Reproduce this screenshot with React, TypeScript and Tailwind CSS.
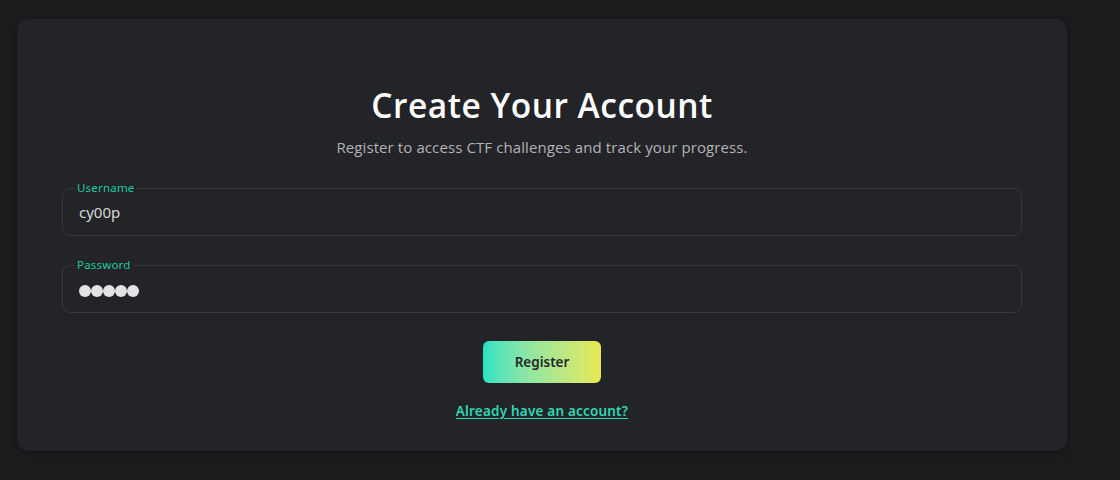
import React from "react";

export default function App() {
  return (
    <div className="min-h-[480px] w-full bg-[#1b1c1e] pt-[19px] pl-[17px] font-['Open_Sans',sans-serif]">
      <div className="w-[1050px] h-[432px] rounded-[12px] bg-[#232428] shadow-[0_2px_8px_rgba(0,0,0,0.35)] px-[45px] pt-[66px] flex flex-col items-center">
        <h1 className="text-[33.5px] leading-[40px] font-semibold text-white tracking-[0.5px]">
          Create Your Account
        </h1>
        <p className="mt-[12px] text-[15px] leading-[20px] text-[#b3b3b6] tracking-[0.1px]">
          Register to access CTF challenges and track your progress.
        </p>

        <fieldset className="mt-[25px] w-full h-[54px] border border-[#37383d] rounded-[8px] px-[15px] pb-0 font-['Noto_Sans',sans-serif]">
          <legend className="-ml-[3px] px-[2px] text-[11.5px] leading-[12px] text-[#1fc9a0] tracking-[0.2px]">
            Username
          </legend>
          <div className="text-[15px] leading-[20px] text-[#d6d6d8] pl-[1px] pt-[8px]">
            cy00p
          </div>
        </fieldset>

        <fieldset className="mt-[23px] w-full h-[54px] border border-[#37383d] rounded-[8px] px-[15px] pb-0 font-['Noto_Sans',sans-serif]">
          <legend className="-ml-[3px] px-[2px] text-[11.5px] leading-[12px] text-[#1fc9a0] tracking-[0.2px]">
            Password
          </legend>
          <div className="flex pl-[1px] pt-[14px]">
            <span className="w-[12px] h-[12px] rounded-full bg-[#e3e3e5]" />
            <span className="w-[12px] h-[12px] rounded-full bg-[#e3e3e5]" />
            <span className="w-[12px] h-[12px] rounded-full bg-[#e3e3e5]" />
            <span className="w-[12px] h-[12px] rounded-full bg-[#e3e3e5]" />
            <span className="w-[12px] h-[12px] rounded-full bg-[#e3e3e5]" />
          </div>
        </fieldset>

        <button className="mt-[28px] w-[118px] h-[42px] rounded-[6px] bg-gradient-to-r from-[#22e2c4] to-[#e7e852] text-[13.5px] font-semibold text-[#26272b] font-['Noto_Sans',sans-serif]">
          Register
        </button>

        <a href="#" className="mt-[19px] text-[13.5px] leading-[18px] font-semibold text-[#2fd6b4] underline underline-offset-2 tracking-[0.2px] font-['Noto_Sans',sans-serif]">
          Already have an account?
        </a>
      </div>
    </div>
  );
}
